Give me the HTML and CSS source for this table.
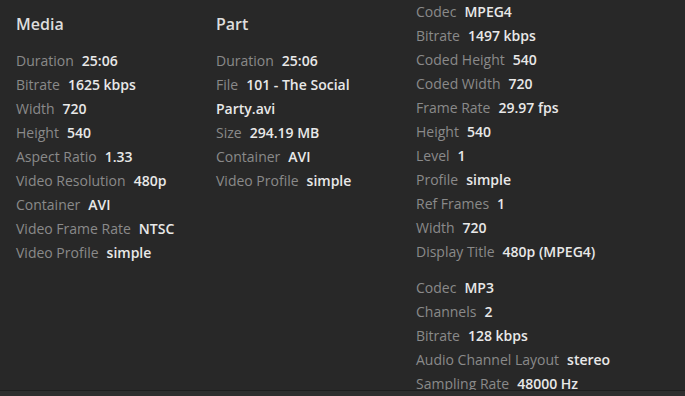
FILE: index.html
```html
<!DOCTYPE html>
<html>
<head>
<meta charset="utf-8">
<link rel="stylesheet" href="styles.css">
</head>
<body>
<div class="page">
  <div class="content">
    <div class="col">
      <div class="heading">Media</div>
      <div class="row"><span class="label">Duration</span><span class="value">25:06</span></div>
      <div class="row"><span class="label">Bitrate</span><span class="value">1625 kbps</span></div>
      <div class="row"><span class="label">Width</span><span class="value">720</span></div>
      <div class="row"><span class="label">Height</span><span class="value">540</span></div>
      <div class="row"><span class="label">Aspect Ratio</span><span class="value">1.33</span></div>
      <div class="row"><span class="label">Video Resolution</span><span class="value">480p</span></div>
      <div class="row"><span class="label">Container</span><span class="value">AVI</span></div>
      <div class="row"><span class="label">Video Frame Rate</span><span class="value">NTSC</span></div>
      <div class="row"><span class="label">Video Profile</span><span class="value">simple</span></div>
    </div>
    <div class="col">
      <div class="heading">Part</div>
      <div class="row"><span class="label">Duration</span><span class="value">25:06</span></div>
      <div class="row"><span class="label">File</span><span class="value">101 - The Social Party.avi</span></div>
      <div class="row"><span class="label">Size</span><span class="value">294.19 MB</span></div>
      <div class="row"><span class="label">Container</span><span class="value">AVI</span></div>
      <div class="row"><span class="label">Video Profile</span><span class="value">simple</span></div>
    </div>
    <div class="col col-streams">
      <div class="heading">Video</div>
      <div class="group">
        <div class="row"><span class="label">Codec</span><span class="value">MPEG4</span></div>
        <div class="row"><span class="label">Bitrate</span><span class="value">1497 kbps</span></div>
        <div class="row"><span class="label">Coded Height</span><span class="value">540</span></div>
        <div class="row"><span class="label">Coded Width</span><span class="value">720</span></div>
        <div class="row"><span class="label">Frame Rate</span><span class="value">29.97 fps</span></div>
        <div class="row"><span class="label">Height</span><span class="value">540</span></div>
        <div class="row"><span class="label">Level</span><span class="value">1</span></div>
        <div class="row"><span class="label">Profile</span><span class="value">simple</span></div>
        <div class="row"><span class="label">Ref Frames</span><span class="value">1</span></div>
        <div class="row"><span class="label">Width</span><span class="value">720</span></div>
        <div class="row"><span class="label">Display Title</span><span class="value">480p (MPEG4)</span></div>
      </div>
      <div class="group">
        <div class="row"><span class="label">Codec</span><span class="value">MP3</span></div>
        <div class="row"><span class="label">Channels</span><span class="value">2</span></div>
        <div class="row"><span class="label">Bitrate</span><span class="value">128 kbps</span></div>
        <div class="row"><span class="label">Audio Channel Layout</span><span class="value">stereo</span></div>
        <div class="row"><span class="label">Sampling Rate</span><span class="value">48000 Hz</span></div>
        <div class="row"><span class="label">Display Title</span><span class="value">MP3 (Stereo)</span></div>
      </div>
    </div>
  </div>
  <div class="footer"></div>
</div>
</body>
</html>
```

FILE: styles.css
```css
html, body {
  margin: 0;
  padding: 0;
  background: #282828;
}
body {
  width: 685px;
  height: 396px;
  overflow: hidden;
  font-family: "Open Sans", "Noto Sans", sans-serif;
  font-size: 14px;
  color: #e8e8e8;
}
.page {
  display: flex;
  flex-direction: column;
  height: 396px;
}
.content {
  height: 390px;
  overflow: hidden;
  display: flex;
  padding-left: 16px;
  box-sizing: border-box;
}
.col {
  width: 200px;
  padding-top: 12px;
  padding-right: 20px;
  box-sizing: border-box;
  flex: none;
}
.col-streams {
  margin-top: -49px;
  width: 269px;
}
.heading {
  font-size: 16px;
  font-weight: 600;
  line-height: 24px;
  color: #dddddd;
  margin-bottom: 13px;
}
.group + .group {
  margin-top: 12px;
}
.row {
  line-height: 24px;
}
.label {
  color: #8a8a8a;
  margin-right: 8px;
}
.value {
  font-weight: 600;
  color: #e8e8e8;
}
.footer {
  height: 6px;
  border-top: 1px solid #1e1e1e;
  background: #2e2e2e;
  box-sizing: border-box;
}
```
